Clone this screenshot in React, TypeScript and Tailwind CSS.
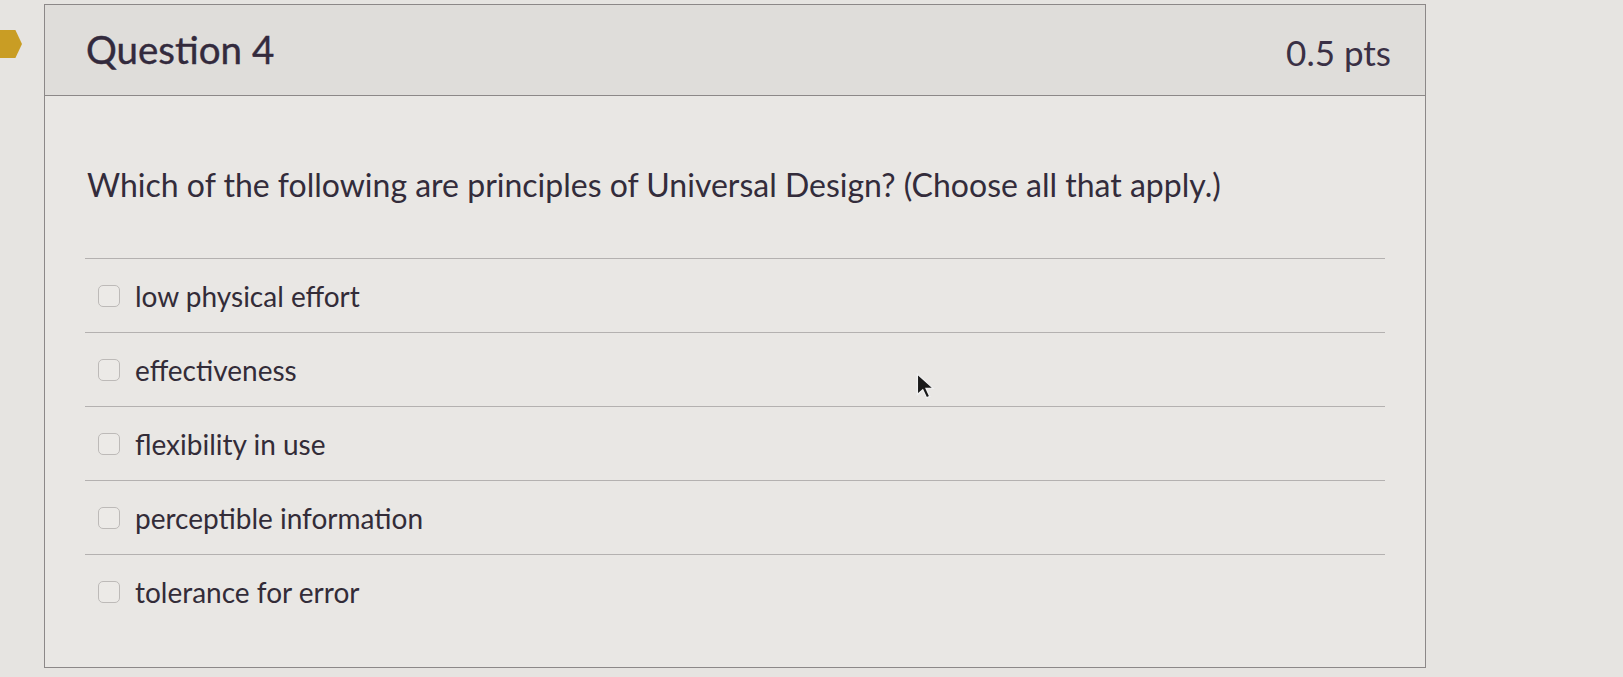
import { Check } from 'lucide-react';

const options = [
  'low physical effort',
  'effectiveness',
  'flexibility in use',
  'perceptible information',
  'tolerance for error',
];

function Cursor() {
  return (
    <svg className="absolute left-[915px] top-[373px]" width="22" height="28" viewBox="0 0 20 26">
      <path d="M2 1 L2 20 L7 15.5 L10.5 23 L13.5 21.7 L10 14.3 L16.5 14 Z" fill="#1a1a1a" stroke="#f2f2f2" strokeWidth="1.2" />
    </svg>
  );
}

export default function App() {
  return (
    <div className="relative h-[677px] w-[1623px] overflow-hidden bg-[#e6e4e1] font-['Lato','Liberation_Sans',sans-serif] text-[#3a3340]">
      <div className="absolute left-0 top-[30px] h-[28px] w-[22px] bg-[#c99d24] [clip-path:polygon(0_0,70%_0,100%_50%,70%_100%,0_100%)]" />
      <div className="ml-[44px] mt-[4px] w-[1382px] border-[1.5px] border-[#8c8888] bg-[#e9e7e4]">
        <div className="flex h-[91px] items-center justify-between border-b-[1.5px] border-[#8c8888] bg-[#dfddda] pl-[41px] pr-[34px]">
          <h2 className="text-[38.5px] font-normal text-[#332a3d] [-webkit-text-stroke:0.4px_#332a3d]">Question 4</h2>
          <span className="pt-[4px] text-[35px] font-normal text-[#3a3045]">0.5 pts</span>
        </div>
        <div className="px-[40px] pb-[38px] pt-[70px]">
          <p className="pl-[2px] text-[32px] leading-[38px] text-[#332c3b]">
            Which of the following are principles of Universal Design? (Choose all that apply.)
          </p>
          <div className="mt-[54px] border-t-[1.5px] border-[#b4b1b0]">
            {options.map((option, index) => (
              <label
                key={option}
                className={`flex h-[74px] items-center gap-[15px] pl-[13px] ${index < options.length - 1 ? 'border-b-[1.5px] border-[#b4b1b0]' : ''}`}
              >
                <span className="flex h-[22px] w-[22px] items-center justify-center rounded-[5px] border-[1.5px] border-[#bdbab8] bg-[#eceae7]">
                  <Check className="hidden h-3 w-3" />
                </span>
                <span className="text-[28px] text-[#332c38]">{option}</span>
              </label>
            ))}
          </div>
        </div>
      </div>
      <Cursor />
    </div>
  );
}
